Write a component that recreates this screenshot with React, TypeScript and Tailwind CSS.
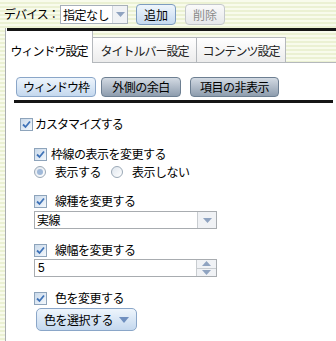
const font = "font-['Noto_Sans_CJK_JP','Noto_Sans',sans-serif]";

function Check() {
  return (
    <span className="inline-flex w-[13px] h-[13px] shrink-0 items-center justify-center border border-[#8ea4bb] bg-gradient-to-br from-[#c9d9ea] to-[#f4f8fc]">
      <svg width="9" height="9" viewBox="0 0 9 9">
        <path d="M1 4.5 L3.5 7 L8 1.5" stroke="#3f73b8" strokeWidth="1.8" fill="none" />
      </svg>
    </span>
  );
}

function Radio({ on }: { on?: boolean }) {
  return (
    <span className="inline-flex w-[12px] h-[12px] shrink-0 items-center justify-center rounded-full border border-[#9aa8b6] bg-gradient-to-br from-[#dfe6ee] to-white">
      {on && <span className="w-[6px] h-[6px] rounded-full bg-[#9fb8d8]" />}
    </span>
  );
}

function Tri({ up }: { up?: boolean }) {
  return (
    <svg width="9" height="5" viewBox="0 0 9 5">
      <path d={up ? "M0 5 L4.5 0 L9 5 Z" : "M0 0 L9 0 L4.5 5 Z"} fill="#8fa3c0" />
    </svg>
  );
}

function Row({ children }: { children: React.ReactNode }) {
  return <div className="flex items-center h-[14px] whitespace-nowrap">{children}</div>;
}

export default function App() {
  return (
    <div
      className={`${font} w-[336px] h-[341px] overflow-hidden text-[12px] text-black bg-[repeating-linear-gradient(to_bottom,#f8fbec_0px,#f8fbec_2px,#ebf1d3_2px,#ebf1d3_4px)]`}
    >
      {/* device bar */}
      <div className="flex items-center h-[28px] pl-[4px] whitespace-nowrap">
        <span className="w-[56px] tracking-[-1px]">デバイス：</span>
        <div className="flex h-[19px] w-[68px] border border-[#a7b0ba] bg-white">
          <span className="flex-1 pl-[2px] leading-[17px] tracking-[-0.5px]">指定なし</span>
          <span className="flex w-[15px] items-center justify-center border-l border-[#d0d6dc] bg-[#f0f2f5]">
            <Tri />
          </span>
        </div>
        <button className="ml-[8px] h-[21px] w-[40px] rounded-[4px] border border-[#7d9cc0] bg-gradient-to-b from-[#eef5fc] to-[#c6daf0] leading-[19px]">
          追加
        </button>
        <button className="ml-[9px] h-[21px] w-[40px] rounded-[4px] border border-[#c4c8cc] bg-gradient-to-b from-[#fafafa] to-[#e6e8ea] text-[#8a8a8a] leading-[19px]">
          削除
        </button>
      </div>

      {/* panel */}
      <div className="ml-[5px] border-l border-[#a8acb0] bg-white">
        <div className="h-[3px] bg-[#151515] ml-[1px]" />
        <div className="flex items-end h-[32px] bg-[repeating-linear-gradient(to_bottom,#f8fbec_0px,#f8fbec_2px,#ebf1d3_2px,#ebf1d3_4px)] border-b border-[#b4b8bc] whitespace-nowrap">
          <div className="relative -mb-px flex h-[32px] w-[87px] items-end justify-center pb-[5px] border-r border-[#b4b8bc] bg-white tracking-[-1px] leading-[14px]">
            ウィンドウ設定
          </div>
          <div className="flex h-[25px] w-[104px] items-end justify-center pb-[4px] border-r border-t border-[#b4b8bc] bg-gradient-to-b from-white to-[#ececec] text-[#222] tracking-[-1px] leading-[14px]">
            タイトルバー設定
          </div>
          <div className="flex h-[25px] w-[89px] items-end justify-center pb-[4px] border-r border-t border-[#b4b8bc] bg-gradient-to-b from-white to-[#ececec] text-[#222] tracking-[-1px] leading-[14px]">
            コンテンツ設定
          </div>
        </div>

        <div className="px-[8px] pt-[14px] h-[278px] whitespace-nowrap">
          <div className="flex gap-[5px] pl-[2px]">
            <button className="h-[20px] w-[80px] rounded-[4px] border border-[#8aa6c8] bg-gradient-to-b from-[#eef5fc] to-[#c4d8ee] tracking-[-1px] leading-[18px]">
              ウィンドウ枠
            </button>
            <button className="h-[20px] w-[80px] rounded-[4px] border border-[#6d7f92] bg-gradient-to-b from-[#d3dae3] to-[#8e9dae] tracking-[-0.5px] leading-[18px]">
              外側の余白
            </button>
            <button className="ml-[4px] h-[20px] w-[89px] rounded-[4px] border border-[#6d7f92] bg-gradient-to-b from-[#d3dae3] to-[#8e9dae] tracking-[-0.5px] leading-[18px]">
              項目の非表示
            </button>
          </div>
          <div className="mt-[3px] h-[3px] bg-[#151515] w-[319px]" />

          <div className="mt-[14px] pl-[6px] flex items-center gap-[2px] h-[14px] tracking-[-1px]">
            <Check />
            <span>カスタマイズする</span>
          </div>

          <div className="ml-[20px] mt-[16px] flex flex-col tracking-[-0.5px]">
            <Row>
              <Check />
              <span className="ml-[4px]">枠線の表示を変更する</span>
            </Row>
            <div className="mt-[4px] flex items-center h-[14px]">
              <Radio on />
              <span className="ml-[9px]">表示する</span>
              <span className="ml-[10px] flex"><Radio /></span>
              <span className="ml-[9px]">表示しない</span>
            </div>

            <div className="mt-[15px]">
              <Row>
                <Check />
                <span className="ml-[8px]">線種を変更する</span>
              </Row>
            </div>
            <div className="mt-[3px] flex h-[18px] w-[183px] border border-[#a8acb0] bg-white">
              <span className="flex-1 pl-[2px] leading-[16px]">実線</span>
              <span className="flex w-[19px] items-center justify-center border-l border-[#c8ccd0] bg-[#f0f2f5]">
                <Tri />
              </span>
            </div>

            <div className="mt-[14px]">
              <Row>
                <Check />
                <span className="ml-[8px]">線幅を変更する</span>
              </Row>
            </div>
            <div className="mt-[2px] flex h-[18px] w-[183px] border border-[#a8acb0] bg-white">
              <span className="flex-1 pl-[3px] leading-[16px] font-['Liberation_Sans',sans-serif]">5</span>
              <span className="flex w-[20px] flex-col border-l border-[#c8ccd0]">
                <span className="flex flex-1 items-center justify-center border-b border-[#c8ccd0] bg-[#f0f2f5]">
                  <Tri up />
                </span>
                <span className="flex flex-1 items-center justify-center bg-[#f0f2f5]">
                  <Tri />
                </span>
              </span>
            </div>

            <div className="mt-[14px]">
              <Row>
                <Check />
                <span className="ml-[8px]">色を変更する</span>
              </Row>
            </div>
            <button className="mt-[3px] ml-[2px] flex h-[23px] w-[101px] items-center justify-center gap-[6px] rounded-[5px] border border-[#8aa6c8] bg-gradient-to-b from-[#eef5fc] to-[#c4d8ee]">
              <span>色を選択する</span>
              <svg width="10" height="6" viewBox="0 0 10 6">
                <path d="M0 0 L10 0 L5 6 Z" fill="#6f8fbf" />
              </svg>
            </button>
          </div>
        </div>
      </div>
    </div>
  );
}
